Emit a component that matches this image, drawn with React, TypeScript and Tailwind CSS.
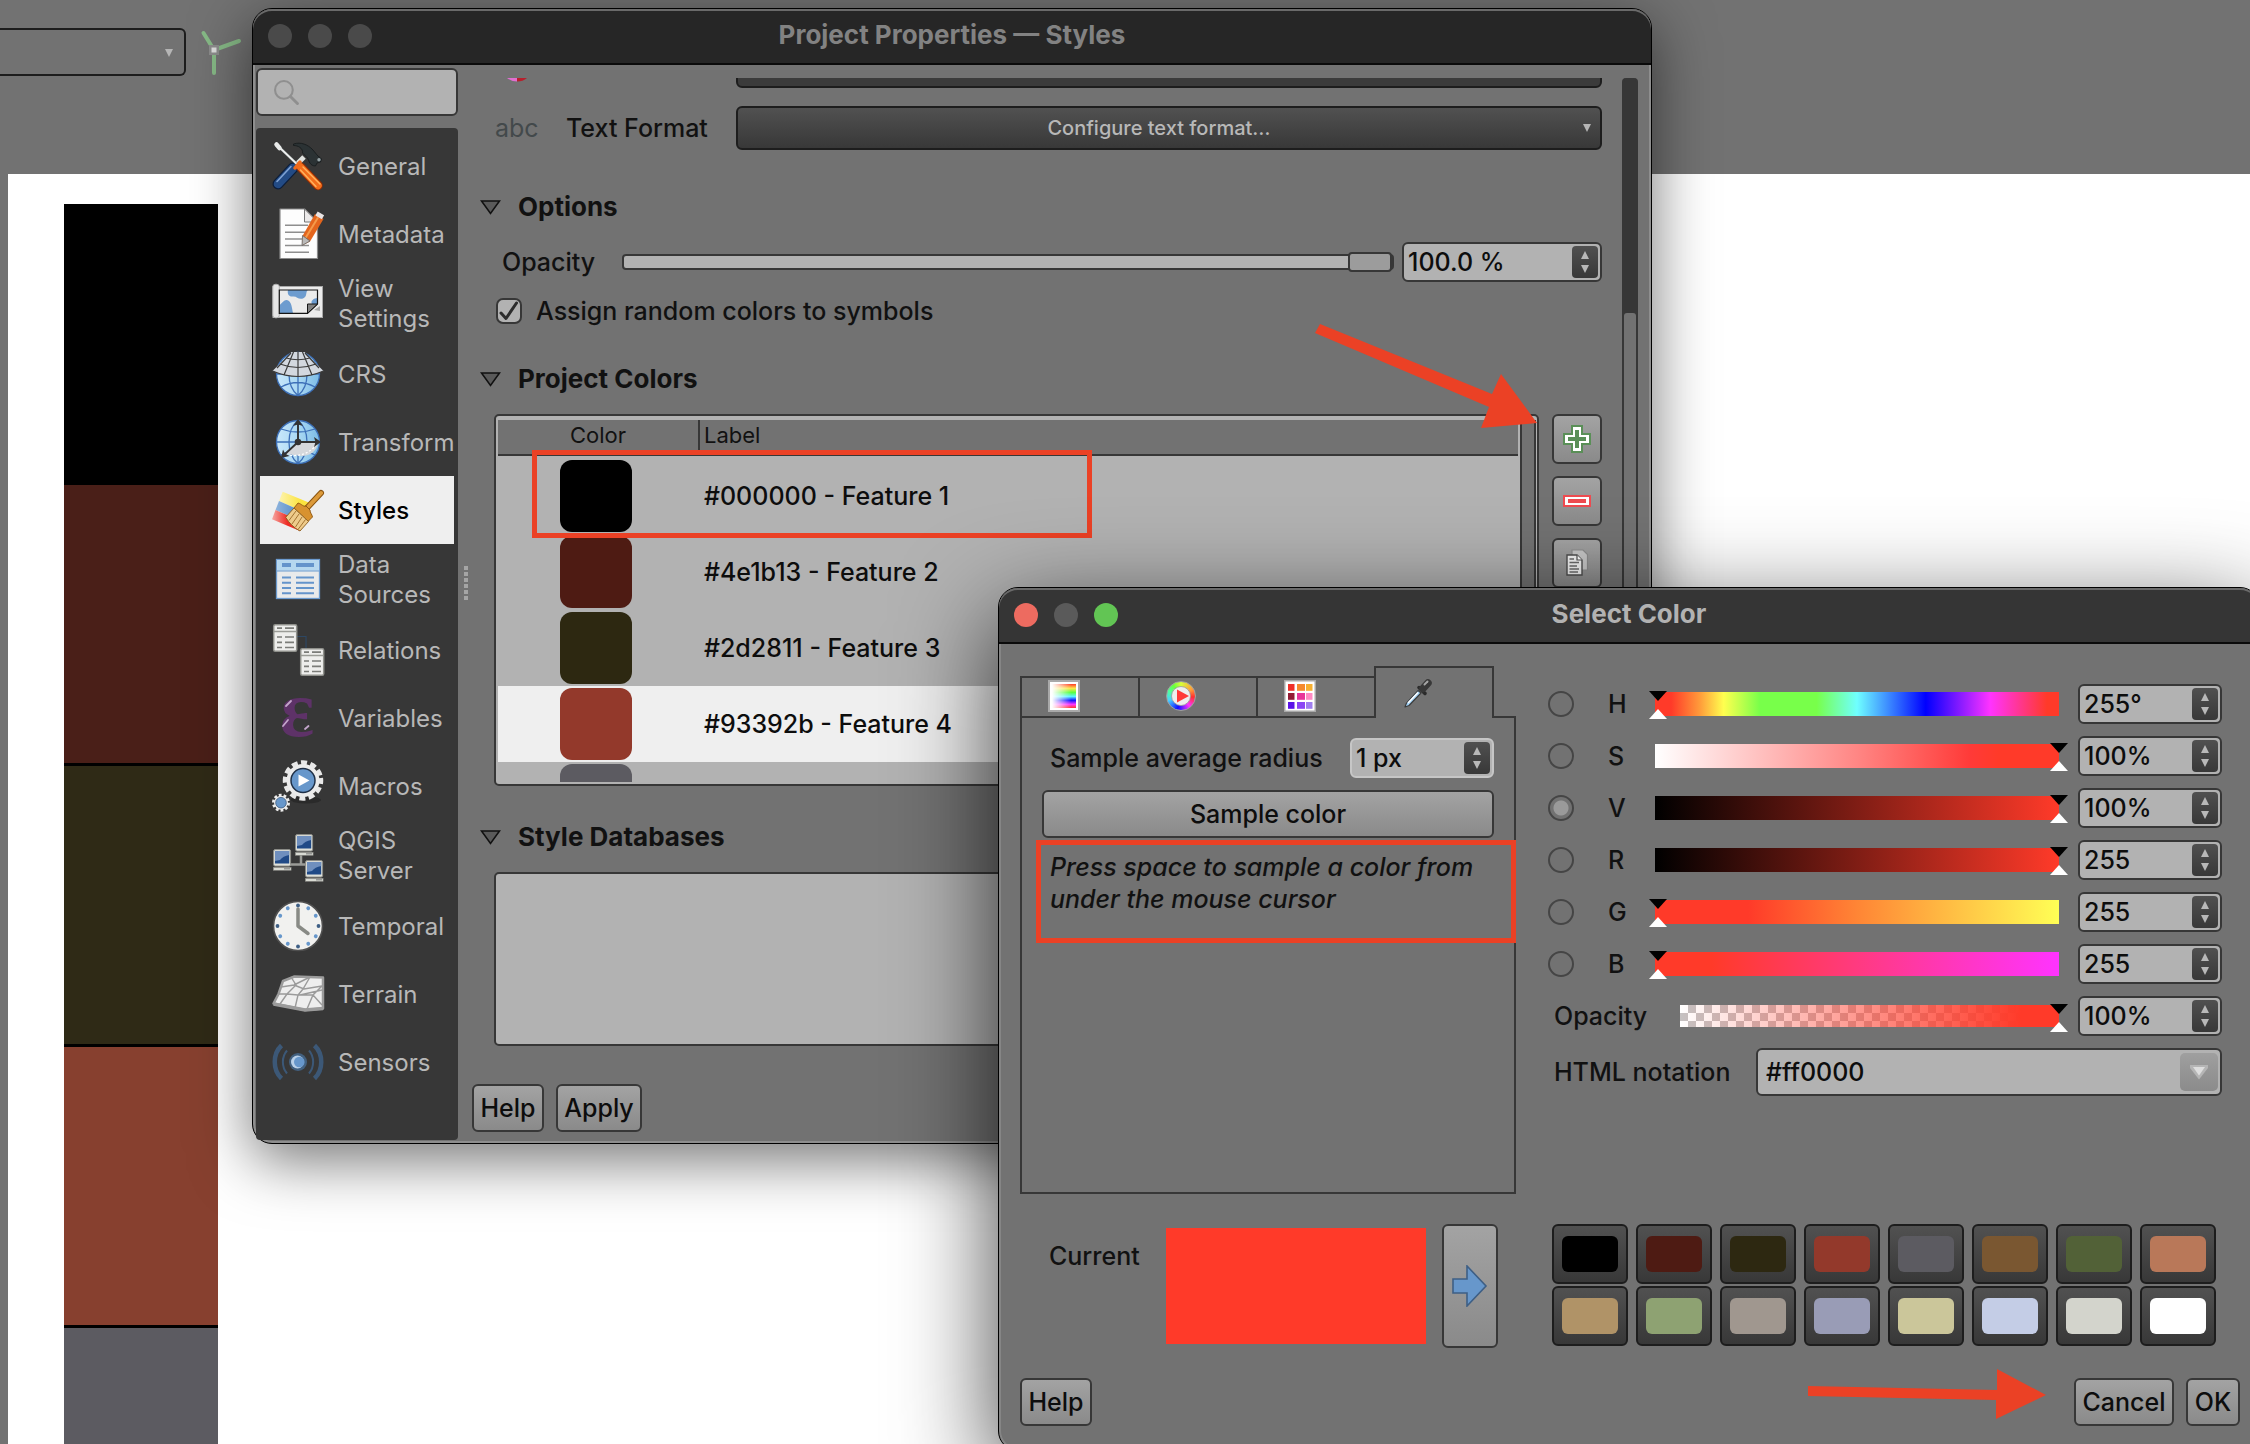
import React from "react";

const RED = "#eb4125";

/* ---------- sidebar icons ---------- */

function Icon({ children }: { children: React.ReactNode }) {
  return (
    <svg viewBox="0 0 52 52" className="size-[52px] shrink-0 overflow-visible" fill="none" aria-hidden="true">
      {children}
    </svg>
  );
}

const GeneralIcon = () => (
  <Icon>
    <path d="M32 17 L20 29" stroke="#dfe3e0" strokeWidth="5" />
    <path d="M21 28 L6 44" stroke="#0d1e3a" strokeWidth="11" strokeLinecap="round" />
    <path d="M21 28 L6 44" stroke="#234b85" strokeWidth="8.5" strokeLinecap="round" />
    <path d="M19 26.500 L5 41.500" stroke="#7fa3d4" strokeWidth="1.600" strokeLinecap="round" />
    <path d="M21.500 4 C29 1.500 36 5 40 9 C44 13 45 16 48 17.500 L49.500 19 L48.500 22 L45 23 L43.500 26 C38 26 37 21 35.500 18 L30.500 13 C31 8 26 5.500 21.500 5.500 Z" fill="#2b3234" stroke="#14191a" strokeWidth="0.800" />
    <circle cx="47" cy="19.800" r="1.700" fill="#97a5a8" />
    <path d="M6 6 L27 26" stroke="#55595a" strokeWidth="3" />
    <path d="M6 6 L27 26" stroke="#eef0ef" strokeWidth="1.900" />
    <path d="M4.500 4.500 L7.500 8" stroke="#e8eae9" strokeWidth="4.500" strokeLinecap="round" />
    <path d="M28.500 27 L46 45.500" stroke="#8c2c06" strokeWidth="9.500" strokeLinecap="round" />
    <path d="M28.500 27 L46 45.500" stroke="#f36d1b" strokeWidth="7.500" strokeLinecap="round" />
    <path d="M31 27 L48 44 M28.500 30 L44 46.500" stroke="#ffb45e" strokeWidth="1.400" strokeLinecap="round" />
    <path d="M23 28 L28 22" stroke="#ee6a1c" strokeWidth="3.500" strokeLinecap="round" />
  </Icon>
);

const MetadataIcon = () => (
  <Icon>
    <path d="M8 1 H32.500 L45.500 14 V50.500 H8 Z" fill="#fdfdfd" stroke="#8b8b8b" strokeWidth="1.200" strokeLinejoin="round" />
    <path d="M32.500 1 V14 H45.500 Z" fill="#eceaea" stroke="#777" strokeWidth="1" strokeLinejoin="round" />
    <path d="M13 17.300 H36 M13 24.300 H33 M13 31 H30 M13 37.600 H37 M13 44.300 H37" stroke="#8e8e8e" strokeWidth="1.500" />
    <path d="M43 6 L51.500 11 L38 33.500 L30 37.500 L30.500 28 Z" fill="#e4651d" />
    <path d="M46 9.500 L33.500 30" stroke="#f59a4a" strokeWidth="2" />
    <path d="M30.500 27.500 L38 33 L30 37.500 Z" fill="#b9b9b9" stroke="#666" strokeWidth="0.800" />
    <path d="M44.500 5.500 L51 9.300" stroke="#e9e4e4" strokeWidth="4.500" />
  </Icon>
);

const ViewIcon = () => (
  <Icon>
    <rect x="1" y="8.500" width="49.500" height="31" fill="#ececec" stroke="#a9a9a9" strokeWidth="1" />
    <rect x="0.800" y="6.300" width="6.500" height="33.500" rx="2.500" fill="#e6e6e6" stroke="#aaa" strokeWidth="0.900" />
    <rect x="7.300" y="12" width="38.200" height="23.300" fill="#ebebeb" />
    <path d="M16 12 H36 C33 14 36 18 31 20.500 C26 22 25 18 21 18.500 C17 19 15 16 16 12 Z M7.800 35 V27 C11 24 13 20 17 23 C20 26 20 31 21 35 Z M45.500 20 V26 L40 26 C38 23 42 20 45.500 20 Z" fill="#6d9ccf" />
    <path d="M7.300 12 H45.500 V26 L35.500 35.300 H7.300 Z" stroke="#161616" strokeWidth="1.200" />
    <path d="M45.500 26 H35.500 V35.300 Z" fill="#818181" stroke="#161616" strokeWidth="1" />
    <path d="M42 32 L48 28 V33 Z" fill="#aaa" />
  </Icon>
);

const GlobeBase = () => (
  <>
    <defs>
      <linearGradient id="globe" x1="0" y1="0" x2="1" y2="0">
        <stop offset="0" stopColor="#c9e8fb" />
        <stop offset="0.550" stopColor="#a6d6f2" />
        <stop offset="1" stopColor="#7bbbe6" />
      </linearGradient>
    </defs>
    <circle cx="26" cy="26" r="21.500" fill="url(#globe)" stroke="#3d70b8" strokeWidth="1.300" />
    <path d="M26 4.500 V47.500 M4.500 26 H47.500 M9 13 Q26 19 43 13 M9 39 Q26 30 43 39 M26 4.500 C14 14 14 38 26 47.500 C38 38 38 14 26 4.500" stroke="#3d70b8" strokeWidth="1.300" />
  </>
);

const CrsIcon = () => (
  <Icon>
    <GlobeBase />
    <path d="M19.500 4 H32.500 C39 10 45 17 51.500 23 Q26 34 0.500 23 C7 17 13 10 19.500 4 Z" fill="#d3d8df" />
    <path d="M0.500 23 Q26 34 51.500 23 M8 16 Q26 23 44 16 M14 10 Q26 13.500 38 10 M21.500 4 L12 27 M26 4 V28.500 M30.500 4 L40 27 M19 5 L5 20 M33 5 L47 20" stroke="#3c3c3c" strokeWidth="1.200" />
  </Icon>
);

const TransformIcon = () => (
  <Icon>
    <GlobeBase />
    <path d="M26 26.500 H46 C45 35 38 40 30 40 L14 38 Z" fill="#d5d8dc" />
    <path d="M14 39 Q34 42 44 29" stroke="#fff" strokeWidth="1.200" strokeDasharray="2 2" />
    <path d="M26 26 V6 M26 26 H45 M26 26 L12 39" stroke="#333" strokeWidth="1.900" />
    <circle cx="26" cy="26" r="3.300" fill="#333" />
    <path d="M26 3 L31 10 L26 8.500 L21 10 Z M49 26 L42 31 L43.500 26 L42 21 Z M9 42 L11 33.500 L13 37.500 L17.500 40 Z" fill="#333" />
  </Icon>
);

const StylesIcon = () => (
  <Icon>
    <defs>
      <linearGradient id="fadeY" x1="0" x2="1"><stop offset="0" stopColor="#fdf3b0" /><stop offset="0.700" stopColor="#fbe33e" /></linearGradient>
      <linearGradient id="fadeB" x1="0" x2="1"><stop offset="0" stopColor="#8fb4dd" /><stop offset="0.600" stopColor="#5f92cb" /></linearGradient>
      <linearGradient id="fadeR" x1="0" x2="1"><stop offset="0" stopColor="#f6a8a3" /><stop offset="0.500" stopColor="#ee2c24" /></linearGradient>
    </defs>
    <path d="M10.700 7.700 L38 19 L34 29 L7 17 Z" fill="url(#fadeY)" />
    <path d="M7 17 L34 29 L31 38 L3.500 26 Z" fill="url(#fadeB)" />
    <path d="M3.500 26 L31 38 L28 47 L0 35.300 Z" fill="url(#fadeR)" />
    <path d="M49 9 L34 25" stroke="#8a5410" strokeWidth="6" strokeLinecap="round" />
    <path d="M49 9 L34 25" stroke="#dc9a3a" strokeWidth="4" strokeLinecap="round" />
    <path d="M26 19 C30 20 31 23 34 22 L38 26 C38 29 40 30 40.500 33 L36 37.500 L22 24 Z" fill="#d8922f" stroke="#8a5410" strokeWidth="0.900" />
    <path d="M22 24 L36.500 37.500 L28 47 C22 44 17 39 13.700 33.300 Z" fill="#eecb8b" stroke="#8a5c1c" strokeWidth="0.900" />
    <path d="M24 27 L17 36.500 M27 30 L20 40 M30 33 L23.500 43 M33.500 35.500 L26 45.500" stroke="#9a6a28" strokeWidth="0.900" />
  </Icon>
);

const DataIcon = () => (
  <Icon>
    <rect x="4.500" y="5.500" width="43" height="39" fill="#e9eaeb" stroke="#6c9bd0" strokeWidth="1.300" />
    <rect x="5.200" y="6.200" width="41.600" height="10.500" fill="#b5d8ef" />
    <path d="M5 17 H47" stroke="#6c9bd0" strokeWidth="1" />
    <path d="M10 11 H19 M24 11 H42" stroke="#6494cb" strokeWidth="4" />
    <path d="M10 23.500 H19 M24 23.500 H42 M10 28.700 H19 M24 28.700 H42 M10 34 H19 M24 34 H42 M10 39.300 H19 M24 39.300 H42" stroke="#6494cb" strokeWidth="1.900" />
  </Icon>
);

const MiniTable = ({ x, y }: { x: number; y: number }) => (
  <g transform={`translate(${x} ${y})`}>
    <rect x="0.700" y="0.700" width="23" height="26.600" rx="1.500" fill="#eeeeec" stroke="#8f908b" strokeWidth="1.500" />
    <path d="M1 7.500 H23.500" stroke="#9b9c97" strokeWidth="1.500" />
    <path d="M4 4.200 H9 M12 4.200 H21 M4 13 H9 M12 13 H21 M4 18.300 H9 M12 18.300 H21 M4 23.500 H9 M12 23.500 H21" stroke="#7b7c78" strokeWidth="1.700" />
  </g>
);

const RelationsIcon = () => (
  <Icon>
    <path d="M25 12.500 H34 V25" stroke="#2d4763" strokeWidth="1.200" />
    <MiniTable x={1} y={0} />
    <MiniTable x={28} y={24} />
  </Icon>
);

const VariablesIcon = () => (
  <Icon>
    <text x="25" y="44" textAnchor="middle" fontSize="80" fontFamily="Liberation Serif, serif" fontWeight="700" fill="#5e3268">ε</text>
    <path d="M14 14 L19 9 M11 34 L16 28 M33 37 L36.500 34" stroke="#c3a5cb" strokeWidth="1.800" strokeLinecap="round" />
  </Icon>
);

const MacrosIcon = () => (
  <Icon>
    <ellipse cx="34" cy="40" rx="15" ry="3.500" fill="#2a2a2a" />
    <circle cx="31" cy="20.500" r="18" stroke="#e8e8e8" strokeWidth="4.500" strokeDasharray="5.900 3.530" transform="rotate(-8 31 20.500)" />
    <circle cx="31" cy="20.500" r="16.500" fill="#ececec" />
    <circle cx="31" cy="20.500" r="12" fill="#6797cb" stroke="#1f3047" strokeWidth="1.500" />
    <path d="M26.500 14.500 L37.500 20.500 L26.500 26.500 Z" fill="#fff" />
    <circle cx="9" cy="42.700" r="7.500" stroke="#ececec" strokeWidth="3" strokeDasharray="2.700 2.010" />
    <circle cx="9" cy="42.700" r="7" fill="#ececec" />
    <circle cx="9" cy="42.700" r="5.300" fill="#6797cb" stroke="#3d5a7c" strokeWidth="0.800" />
  </Icon>
);

const Monitor = ({ x, y }: { x: number; y: number }) => (
  <g transform={`translate(${x} ${y})`}>
    <rect x="0.600" y="0.600" width="17" height="16.500" rx="1.500" fill="#dfe1da" stroke="#8b8c87" strokeWidth="1" />
    <rect x="2" y="2" width="14.200" height="12.500" fill="#204a87" />
    <path d="M2 2 H16.200 V6 Q10 7 7 11 L2 12 Z" fill="#6f8fbe" />
    <rect x="0.300" y="18.300" width="17.800" height="3" fill="#d8dad3" stroke="#82837e" strokeWidth="0.600" />
    <path d="M11 19.800 H17" stroke="#888" strokeWidth="1.200" />
  </g>
);

const ServerIcon = () => (
  <Icon>
    <path d="M29 25 V34.500 M17 34.500 H35" stroke="#9b9c98" strokeWidth="2.500" />
    <Monitor x={23} y={4} />
    <Monitor x={1} y={19} />
    <Monitor x={33} y={30} />
  </Icon>
);

const TemporalIcon = () => (
  <Icon>
    <circle cx="26" cy="26" r="24.500" fill="#f1f1ef" stroke="#4f4f4f" strokeWidth="1.600" />
    {Array.from({ length: 12 }, (_, i) => (
      <circle key={i} cx={26} cy={5.5} r={1.9} fill={i % 3 ? "#6797cb" : "#3e5f85"} transform={`rotate(${i * 30} 26 26)`} />
    ))}
    <path d="M26 9 V26 L36 33.500" stroke="#888a85" strokeWidth="3.500" strokeLinecap="round" strokeLinejoin="round" />
  </Icon>
);

const TerrainIcon = () => (
  <Icon>
    <path d="M11 13 L22.500 8.500 L51 9.500 V40.500 L33 42 L1.500 35.500 L6.500 26 Z" fill="#eeeeee" stroke="#9b9b9b" strokeWidth="2.500" strokeLinejoin="round" />
    <path d="M9 19 L22 17 L30 13 L38 9 M22 17 L32 21 L50 18 M7 26 L15 26 L26 27 L41 27 L50 37 M19 9 L24 17 L15 26 L8 36 M38 9 L31 21 L26 27 L23 40 M50 18 L41 27 L35 41 M28 27 L50 22" stroke="#9b9b9b" strokeWidth="1.400" />
    <path d="M1.500 36 L33 42 L51 40.500" stroke="#9b9b9b" strokeWidth="3.500" />
  </Icon>
);

const SensorsIcon = () => (
  <Icon>
    <path d="M9.500 9.500 C0.500 18 0.500 34 9.500 42.500 M42.500 9.500 C51.500 18 51.500 34 42.500 42.500" stroke="#3c5877" strokeWidth="4.500" />
    <path d="M15 14.500 C9.500 21 9.500 31 15 37.500 M37 14.500 C42.500 21 42.500 31 37 37.500" stroke="#3c5877" strokeWidth="2" />
    <circle cx="26" cy="26" r="9" fill="#42607f" />
    <circle cx="25.500" cy="26" r="6.500" fill="#b9d0e8" />
    <circle cx="27.300" cy="26" r="5.300" fill="#6797cb" />
  </Icon>
);

const NAV: { label: string; icon: () => React.JSX.Element; tall?: boolean; active?: boolean }[] = [
  { label: "General", icon: GeneralIcon },
  { label: "Metadata", icon: MetadataIcon },
  { label: "View Settings", icon: ViewIcon, tall: true },
  { label: "CRS", icon: CrsIcon },
  { label: "Transform", icon: TransformIcon },
  { label: "Styles", icon: StylesIcon, active: true },
  { label: "Data Sources", icon: DataIcon, tall: true },
  { label: "Relations", icon: RelationsIcon },
  { label: "Variables", icon: VariablesIcon },
  { label: "Macros", icon: MacrosIcon },
  { label: "QGIS Server", icon: ServerIcon, tall: true },
  { label: "Temporal", icon: TemporalIcon },
  { label: "Terrain", icon: TerrainIcon },
  { label: "Sensors", icon: SensorsIcon },
];

/* ---------- shared controls ---------- */

function PushButton({ children, className = "" }: { children: React.ReactNode; className?: string }) {
  return (
    <button
      type="button"
      className={`flex items-center justify-center rounded-[6px] border-2 border-[#373737] bg-linear-to-b from-[#a3a3a3] to-[#8a8a8a] text-[25px] leading-8 font-medium text-[#0d0d0d] ${className}`}
    >
      {children}
    </button>
  );
}

function Spin({ id, label, value, className = "", border = "border-[#373737]" }: { id: string; label: string; value: string; className?: string; border?: string }) {
  return (
    <div className={`flex h-10 shrink-0 items-center rounded-[6px] border-2 bg-[#b2b2b2] pr-0.5 ${border} ${className}`}>
      <input id={id} aria-label={label} defaultValue={value} className="w-full min-w-0 flex-1 bg-transparent pl-1 text-[25px] leading-8 font-medium text-[#0d0d0d] outline-none" />
      <button type="button" aria-label={`Step ${label}`} className="flex h-8 w-[26px] shrink-0 items-center justify-center rounded-[4px] bg-linear-to-b from-[#505050] to-[#383838]">
        <svg viewBox="0 0 26 32" className="h-8 w-[26px]" fill="#b8b8b8" aria-hidden="true">
          <path d="M13 5 L17 13 H9 Z M13 27 L17 19 H9 Z" />
        </svg>
      </button>
    </div>
  );
}

function SectionTitle({ children, className = "" }: { children: React.ReactNode; className?: string }) {
  return (
    <h2 className={`flex h-8 items-center gap-[17px] text-[26px] leading-8 font-bold text-[#111] ${className}`}>
      <svg viewBox="0 0 21 15" className="h-[15px] w-[21px]" aria-hidden="true">
        <path d="M1.500 1 H19.500 L10.500 13.500 Z" fill="#5a5a5a" stroke="#111" strokeWidth="1.600" />
      </svg>
      {children}
    </h2>
  );
}

function Caret({ className = "" }: { className?: string }) {
  return (
    <svg viewBox="0 0 8 8" className={`size-2 ${className}`} fill="#b5b5b5" aria-hidden="true">
      <path d="M0 0 H8 L4 8 Z" />
    </svg>
  );
}

function TitleBar({ title, bar, text, lights }: { title: string; bar: string; text: string; lights: string[] }) {
  return (
    <header className={`relative flex h-14 items-center justify-center rounded-t-[19px] border-b-2 border-[#0a0a0a] shadow-[inset_0_2px_0_#6a6a6a] ${bar}`}>
      <div className="absolute left-[15px] flex gap-4">
        {lights.map((c, i) => (
          <span key={i} className={`size-6 rounded-full ${c}`} />
        ))}
      </div>
      <h1 className={`pb-0.5 text-[26px] leading-8 font-bold ${text}`}>{title}</h1>
    </header>
  );
}

/* ---------- project properties window ---------- */

const COLORS = [
  { c: "#000000", label: "#000000 - Feature 1" },
  { c: "#4e1b13", label: "#4e1b13 - Feature 2" },
  { c: "#2d2811", label: "#2d2811 - Feature 3" },
  { c: "#93392b", label: "#93392b - Feature 4", selected: true },
  { c: "#5c5b61", label: "" },
];

function Sidebar() {
  return (
    <div className="flex w-[202px] shrink-0 flex-col gap-3">
      <label className="flex h-12 items-center rounded-[6px] border-2 border-[#373737] bg-[#b2b2b2] pl-4">
        <svg viewBox="0 0 24 24" className="size-[25px] shrink-0" fill="none" stroke="#8f8f8f" strokeWidth="2" strokeLinecap="round" aria-hidden="true">
          <circle cx="9.500" cy="9.500" r="8.500" />
          <path d="M16 16 L22.500 22.500" strokeWidth="2.800" />
        </svg>
        <input type="search" aria-label="Search" className="w-full min-w-0 bg-transparent pl-2 text-[24px] outline-none" />
      </label>
      <nav className="flex flex-1 flex-col rounded-[4px] bg-[#373737] px-1 pt-1 pb-11">
        {NAV.map(({ label, icon: I, tall, active }) => (
          <button
            type="button"
            key={label}
            className={`flex w-full items-center gap-[14px] pl-3 text-left text-[24px] leading-[30px] ${tall ? "h-[72px]" : "h-[68px]"} ${active ? "bg-[#efefef] font-medium text-black" : "text-[#b8b8b8]"}`}
          >
            <I />
            <span className={tall ? "" : "pt-0.5"}>{label}</span>
          </button>
        ))}
      </nav>
    </div>
  );
}

function ColorTable() {
  return (
    <div className="relative ml-[14px] h-[372px] w-[1045px] shrink-0">
      <div className="flex h-full overflow-hidden rounded-[5px] border-2 border-[#373737] bg-[#b2b2b2] pt-1 pr-px pb-0.5 pl-0.5">
        <div className="h-full flex-1 overflow-hidden">
          <table className="w-full border-separate border-spacing-0 text-left">
            <thead>
              <tr className="text-[22px] leading-7 text-[#111]">
                <th scope="col" className="h-9 w-[202px] border-r-2 border-b-2 border-[#373737] bg-[#727272] p-0 pb-1 text-center font-normal">Color</th>
                <th scope="col" className="h-9 border-b-2 border-[#373737] bg-[#727272] p-0 pb-1 pl-1 font-normal">Label</th>
              </tr>
            </thead>
            <tbody className="before:block before:h-0.5 before:content-['']">
              {COLORS.map((r) => (
                <tr key={r.c} className={`h-[76px] ${r.selected ? "bg-[#efefef]" : ""}`}>
                  <td className="p-0 pl-[62px]">
                    <div className="h-[72px] w-[72px] rounded-xl" style={{ backgroundColor: r.c }} />
                  </td>
                  <td className="p-0 pl-1 text-[25px] leading-8 font-medium text-[#0d0d0d]">{r.label}</td>
                </tr>
              ))}
            </tbody>
          </table>
        </div>
        <div className="ml-0.5 w-4 border-2 border-[#373737] bg-[#727272]" />
      </div>
      <div className="absolute top-9 left-[38px] h-[88px] w-[560px] border-[5px] border-[#eb4125]" />
    </div>
  );
}

function PropertiesWindow() {
  return (
    <section className="absolute top-2 right-[598px] left-[252px] min-w-[1400px] rounded-[20px] border border-black bg-[#727272] shadow-[inset_0_0_0_2px_#8e8e8e,0_16px_60px_rgba(0,0,0,0.55)]">
      <TitleBar title="Project Properties — Styles" bar="bg-[#262626]" text="text-[#828282]" lights={["bg-[#4a4a4a]", "bg-[#4a4a4a]", "bg-[#4a4a4a]"]} />
      <div className="flex px-[3px] pt-[3px] pb-[3px]">
        <Sidebar />
        <div className="flex w-[14px] items-center justify-center">
          <div className="mb-10 ml-0.5 h-9 w-1 bg-[repeating-linear-gradient(to_bottom,#a5a5a5_0_4px,transparent_4px_6px)]" />
        </div>
        <div className="flex flex-1 flex-col">
          <div className="flex flex-1 pt-[10px] pr-[10px]">
            <div className="flex min-w-0 flex-1 flex-col pl-2">
              <div className="flex h-[10px] items-end overflow-hidden">
                <svg viewBox="0 0 20 4" className="mb-[6px] ml-[27px] h-1 w-5" aria-hidden="true">
                  <path d="M0 0 H10 V3.500 Q4 3.500 0 0" fill="#e06fd0" />
                  <path d="M10 0 H20 Q16 3.500 10 3.500" fill="#b81f2c" />
                </svg>
                <div className="ml-auto h-8 w-[866px] rounded-[6px] border-2 border-[#1d1d1d] bg-[#3b3b3b]" />
              </div>
              <div className="mt-[18px] flex h-11 items-center text-[25px] leading-8 text-[#111]">
                <span className="ml-[15px] w-[71px] text-[#43494b]">abc</span>
                <span className="flex-1 font-medium">Text Format</span>
                <button type="button" className="relative flex h-11 w-[866px] items-center justify-center rounded-[6px] border-2 border-[#1d1d1d] bg-linear-to-b from-[#515151] to-[#383838] pr-5 text-[20px] font-medium text-[#b8b8b8]">
                  Configure text format…
                  <Caret className="absolute right-[9px]" />
                </button>
              </div>
              <SectionTitle className="mt-[41px]">Options</SectionTitle>
              <div className="mt-[19px] flex h-10 items-center text-[25px] leading-8 font-medium text-[#111]">
                <label htmlFor="layer-opacity" className="ml-[22px] w-[120px]">Opacity</label>
                <input
                  id="layer-opacity"
                  type="range"
                  defaultValue={100}
                  className="mr-2 h-4 min-w-0 flex-1 appearance-none rounded-[4px] border-2 border-[#373737] bg-[#b2b2b2] [&::-webkit-slider-thumb]:h-5 [&::-webkit-slider-thumb]:w-11 [&::-webkit-slider-thumb]:appearance-none [&::-webkit-slider-thumb]:rounded-[4px] [&::-webkit-slider-thumb]:border-2 [&::-webkit-slider-thumb]:border-[#373737] [&::-webkit-slider-thumb]:bg-[#9c9c9c]"
                />
                <Spin id="opacity-value" label="opacity value" value="100.0 %" className="w-[200px]" />
              </div>
              <label className="mt-4 ml-4 flex h-[26px] items-center gap-[14px] text-[25px] leading-8 font-medium text-[#111]">
                <span className="relative size-[26px]">
                  <input type="checkbox" defaultChecked className="block size-[26px] appearance-none rounded-[7px] border-2 border-[#373737] bg-[#b2b2b2]" />
                  <svg viewBox="0 0 26 26" className="pointer-events-none absolute inset-0 size-[26px]" fill="none" stroke="#2d2d2d" strokeWidth="3" strokeLinecap="round" strokeLinejoin="round" aria-hidden="true">
                    <path d="M5 15 L10 20.500 L20.500 5" />
                  </svg>
                </span>
                Assign random colors to symbols
              </label>
              <SectionTitle className="mt-[39px]">Project Colors</SectionTitle>
              <div className="mt-[19px] flex">
                <ColorTable />
                <div className="ml-auto flex flex-col gap-3">
                  <PushButton className="h-[50px] w-[50px]">
                    <svg viewBox="0 0 30 30" className="size-[30px]" aria-label="Add color" role="img">
                      <path d="M10 2 H20 V10 H28 V20 H20 V28 H10 V20 H2 V10 H10 Z" fill="#fff" stroke="#5a8f57" strokeWidth="2" />
                      <path d="M15 6 V24 M6 15 H24" stroke="#5a8f57" strokeWidth="4" />
                    </svg>
                  </PushButton>
                  <PushButton className="h-[50px] w-[50px]">
                    <svg viewBox="0 0 30 30" className="size-[30px]" aria-label="Remove color" role="img">
                      <path d="M2 10 H28 V20 H2 Z" fill="#fff" stroke="#ee4b50" strokeWidth="2" />
                      <path d="M6 15 H24" stroke="#ee4b50" strokeWidth="4" />
                    </svg>
                  </PushButton>
                  <PushButton className="h-[50px] w-[50px]">
                    <svg viewBox="0 0 30 30" className="size-[30px]" aria-label="Copy colors" role="img">
                      <path d="M10 2 H21 L25.500 6.500 V22 H10 Z" fill="#c6c6c6" stroke="#8b8b8b" strokeWidth="1.200" />
                      <path d="M5 7 H15 L20 12 V27 H5 Z" fill="#f2f2f2" stroke="#4e4e4e" strokeWidth="1.400" />
                      <path d="M15 7 V12 H20" fill="#fff" stroke="#4e4e4e" strokeWidth="1.200" />
                      <path d="M7.500 11 H12 M7.500 14.500 H17 M7.500 18 H15 M7.500 21 H17 M7.500 24 H16" stroke="#6b6b6b" strokeWidth="1.300" />
                    </svg>
                  </PushButton>
                </div>
              </div>
              <SectionTitle className="mt-[35px]">Style Databases</SectionTitle>
              <div className="mt-[19px] mr-[63px] ml-[14px] h-[174px] rounded-[5px] border-2 border-[#373737] bg-[#b2b2b2]" />
            </div>
            <div className="ml-5 w-4 rounded-t-[4px] border-x-2 border-[#373737] bg-[#373737] pt-[235px]">
              <div className="h-full rounded-t-[3px] bg-[#727272]" />
            </div>
          </div>
          <div className="flex gap-3 pt-[38px] pb-2">
            <PushButton className="h-12 w-[72px]">Help</PushButton>
            <PushButton className="h-12 w-[86px]">Apply</PushButton>
          </div>
        </div>
      </div>
      <svg viewBox="0 0 222 104" className="pointer-events-none absolute top-[315px] left-[1062px] h-[104px] w-[222px]" fill={RED} aria-hidden="true">
        <path d="M5 0 L177 70 L186 50 L222 99 L166 104 L174 83 L0 9 Z" />
      </svg>
    </section>
  );
}

/* ---------- select color dialog ---------- */

const CHANNELS = [
  { k: "H", v: "255°", at: "start", bar: "bg-[linear-gradient(to_right,#ff3a29_4%,#ff9a3a_11%,#ffff4f_17%,#78ff4a_26%,#78ff4a_40%,#6fffff_50%,#0000ff_67%,#ff33ff_83%,#ff3a29_97%)]" },
  { k: "S", v: "100%", at: "end", bar: "bg-[linear-gradient(to_right,#ffffff,#ff8684_50%,#ff3a38_78%,#ff3a29_85%)]" },
  { k: "V", v: "100%", at: "end", on: true, bar: "bg-[linear-gradient(to_right,#000000,#ff3a29)]" },
  { k: "R", v: "255", at: "end", bar: "bg-[linear-gradient(to_right,#000000,#ff3a29)]" },
  { k: "G", v: "255", at: "start", bar: "bg-[linear-gradient(to_right,#ff3a29_23%,#ff8535_50%,#ffff55)]" },
  { k: "B", v: "255", at: "start", bar: "bg-[linear-gradient(to_right,#ff3a29_14%,#ff3a80_50%,#ff33ff)]" },
];

function Ramp({ label, bar, at, height = "h-6" }: { label: string; bar: string; at: string; height?: string }) {
  return (
    <div className={`relative min-w-0 flex-1 ${height}`}>
      <input
        type="range"
        aria-label={label}
        min={0}
        max={100}
        defaultValue={at === "end" ? 100 : 0}
        className={`block w-full appearance-none [&::-webkit-slider-thumb]:h-6 [&::-webkit-slider-thumb]:w-1 [&::-webkit-slider-thumb]:appearance-none [&::-webkit-slider-thumb]:bg-transparent ${height} ${bar}`}
      />
      <svg viewBox="0 0 18 28" className={`pointer-events-none absolute -top-px h-7 w-[18px] ${at === "end" ? "-right-[9px]" : "-left-[6px]"}`} aria-hidden="true">
        <path d="M0 0 H18 L9 10 Z" fill="#000" />
        <path d="M0 28 H18 L9 18 Z" fill="#fff" />
      </svg>
    </div>
  );
}

const SWATCHES = [
  "#000000", "#4e1b13", "#2d2811", "#93392b", "#5c5b61", "#7a5731", "#526137", "#b97859",
  "#b09367", "#8ea272", "#a0978f", "#999cb6", "#cbc69a", "#c4cde6", "#d3d4cc", "#ffffff",
];

const TAB_ICONS = [
  <svg key="box" viewBox="0 0 32 32" className="size-8" role="img" aria-label="Color ramp">
    <defs>
      <linearGradient id="rainbow" x1="0" y1="0" x2="0" y2="1">
        <stop offset="0" stopColor="#ff3a29" /><stop offset="0.180" stopColor="#ffe74a" /><stop offset="0.350" stopColor="#5cff3d" />
        <stop offset="0.520" stopColor="#59f6ff" /><stop offset="0.680" stopColor="#1010ff" /><stop offset="0.850" stopColor="#ff33ff" /><stop offset="1" stopColor="#ff3a29" />
      </linearGradient>
      <linearGradient id="whiten"><stop offset="0" stopColor="#fff" /><stop offset="0.800" stopColor="#fff" stopOpacity="0" /></linearGradient>
    </defs>
    <rect width="32" height="32" fill="#a9a9a9" />
    <rect x="2" y="2" width="28" height="28" fill="#fff" />
    <rect x="4" y="4" width="24" height="24" fill="url(#rainbow)" />
    <rect x="4" y="4" width="24" height="24" fill="url(#whiten)" />
  </svg>,
  <span key="wheel" className="relative flex size-[30px] items-center justify-center rounded-full border border-[#a0a0a0] bg-[conic-gradient(#d9ff3a,#ff9a3a_60deg,#ff3030_95deg,#ff33ff_140deg,#1010ff_195deg,#4ad0ff_250deg,#4dffa0_290deg,#6bff3a_325deg,#d9ff3a)]">
    <svg viewBox="0 0 20 20" className="size-5" role="img" aria-label="Color wheel">
      <circle cx="10" cy="10" r="9.500" fill="#eee" stroke="#999" strokeWidth="0.800" />
      <path d="M6 3.500 L18 10 L6 16.500 Z" fill="#ff3a38" />
    </svg>
  </span>,
  <svg key="grid" viewBox="0 0 32 32" className="size-8" role="img" aria-label="Color swatches">
    <rect width="32" height="32" fill="#a9a9a9" />
    <rect x="1.500" y="1.500" width="29" height="29" fill="#fff" />
    {["#f0302a", "#f58a2e", "#f7b031", "#931b34", "#e8359a", "#ff8ac4", "#5a12e8", "#8a45f5", "#a07ff0"].map((c, i) => (
      <rect key={c} x={4 + (i % 3) * 9} y={4 + Math.floor(i / 3) * 9} width={i % 3 === 1 ? 8 : 6.5} height="6.800" fill={c} />
    ))}
  </svg>,
  <svg key="pick" viewBox="0 0 32 32" className="size-8" role="img" aria-label="Color picker">
    <path d="M3 30 L4.500 26 L16 13.500 L19 16 L7 28.500 Z" fill="#9fd0f5" stroke="#3a3a3a" strokeWidth="1.100" strokeLinejoin="round" />
    <path d="M6 26 L16 15.500" stroke="#fff" strokeWidth="1.500" />
    <path d="M17 10.500 L23 16.500" stroke="#2b2b2b" strokeWidth="3.500" strokeLinecap="round" />
    <path d="M21 11.500 L26 6" stroke="#383838" strokeWidth="7.500" strokeLinecap="round" />
    <path d="M22.500 7.500 L25.500 4.500" stroke="#a5a5a5" strokeWidth="2" strokeLinecap="round" />
  </svg>,
];

function SelectColorDialog() {
  return (
    <section className="absolute top-[587px] -right-[10px] left-[998px] min-w-[1262px] rounded-[20px] border border-black bg-[#727272] shadow-[inset_0_0_0_2px_#858585,0_30px_100px_rgba(0,0,0,0.75)]">
      <TitleBar title="Select Color" bar="bg-[#353535]" text="text-[#b2b2b2]" lights={["bg-[#ed6b60]", "bg-[#5a5a5a]", "bg-[#62c554]"]} />
      <div className="flex flex-col gap-[30px] pt-[22px] pr-[19px] pb-6 pl-[21px]">
        <div className="flex gap-8">
          {/* picker tabs and current colour */}
          <div className="flex w-[496px] shrink-0 flex-col">
            <div role="tablist" className="z-10 flex h-[52px] items-end">
              {TAB_ICONS.map((icon, i) => (
                <button
                  type="button"
                  role="tab"
                  aria-selected={i === 3}
                  key={i}
                  className={
                    i === 3
                      ? "flex h-[52px] w-[120px] items-center border-2 border-b-0 border-[#373737] bg-[#727272] pl-[26px]"
                      : "flex h-[42px] w-[118px] items-center border-y-2 border-l-2 border-[#373737] pb-0.5 pl-[26px]"
                  }
                >
                  {icon}
                </button>
              ))}
            </div>
            <div className="relative -mt-0.5 flex h-[478px] flex-col border-2 border-[#373737] pt-5 pr-5 pl-5">
              <div className="flex h-10 items-center justify-between pl-2 text-[25px] leading-8 font-medium text-[#111]">
                <label htmlFor="radius">Sample average radius</label>
                <Spin id="radius" label="radius" value="1 px" className="w-36" border="border-[#c6c6c6]" />
              </div>
              <PushButton className="mt-3 h-12 w-full">Sample color</PushButton>
              <p className="mt-[13px] pl-2 text-[25px] leading-8 font-medium text-[#111] italic">Press space to sample a color from<br />under the mouse cursor</p>
              <div className="absolute top-[122px] -right-0.5 left-[14px] h-[103px] border-[5px] border-[#eb4125]" />
            </div>
            <div className="mt-[30px] flex h-[124px]">
              <span className="mt-4 ml-[29px] w-[117px] text-[25px] leading-8 font-medium text-[#111]">Current</span>
              <div className="my-1 w-[260px] bg-[#ff3a29]" />
              <PushButton className="ml-4 w-14">
                <svg viewBox="0 0 36 42" className="h-[42px] w-9" role="img" aria-label="Add to swatches">
                  <path d="M1 14 H15 V1 L34 21 L15 41 V28 H1 Z" fill="#6797cb" stroke="#3e5f85" strokeWidth="1.600" />
                </svg>
              </PushButton>
            </div>
          </div>
          {/* channel sliders and swatches */}
          <div className="flex min-w-0 flex-1 flex-col gap-3 pt-[18px] pr-[18px]">
            {CHANNELS.map((c) => (
              <div key={c.k} className="flex h-10 items-center text-[25px] leading-8 font-medium text-[#111]">
                <input
                  id={`ch-${c.k}`}
                  type="radio"
                  name="channel"
                  defaultChecked={c.on}
                  className={`block size-[26px] shrink-0 appearance-none self-center rounded-full border-2 border-[#454545] ${c.on ? "bg-[radial-gradient(circle,#9a9a9a_7px,transparent_8px)]" : ""}`}
                />
                <label htmlFor={`ch-${c.k}`} className="ml-[34px] w-[47px]">{c.k}</label>
                <Ramp label={c.k} bar={c.bar} at={c.at} />
                <Spin id={`val-${c.k}`} label={`${c.k} value`} value={c.v} className="ml-[19px] w-36" />
              </div>
            ))}
            <div className="flex h-10 items-center text-[25px] leading-8 font-medium text-[#111]">
              <span className="ml-1.5 w-[126px]">Opacity</span>
              <Ramp
                label="Opacity"
                at="end"
                height="h-[22px]"
                bar="bg-[linear-gradient(to_right,transparent,#ff3a29_90%),repeating-conic-gradient(#c6c2c2_0_25%,#ffffff_0_50%)] bg-[length:100%_100%,16px_16px]"
              />
              <Spin id="val-opacity" label="Opacity value" value="100%" className="ml-[19px] w-36" />
            </div>
            <div className="flex h-12 items-center text-[25px] leading-8 font-medium text-[#111]">
              <label htmlFor="html" className="ml-1.5 w-[202px] shrink-0">HTML notation</label>
              <div className="flex h-12 min-w-0 flex-1 items-center rounded-[6px] border-2 border-[#373737] bg-[#b2b2b2] pr-0.5">
                <input id="html" defaultValue="#ff0000" className="min-w-0 flex-1 bg-transparent pl-2 text-[25px] leading-8 font-medium text-[#0d0d0d] outline-none" />
                <button type="button" aria-label="Color menu" className="flex h-[38px] w-[38px] items-center justify-center rounded-[5px] bg-linear-to-b from-[#9f9f9f] to-[#8b8b8b]">
                  <svg viewBox="0 0 20 16" className="h-4 w-5" aria-hidden="true">
                    <path d="M1 1 H19 V4 L10 15.500 L1 4 Z" fill="#b5b5b5" />
                    <path d="M4 3 H16 L10 11.500 Z" fill="#dedede" />
                  </svg>
                </button>
              </div>
            </div>
            <div className="mt-auto mb-0.5 ml-1 grid w-[664px] grid-cols-8 gap-x-2 gap-y-0.5">
              {SWATCHES.map((c, i) => (
                <button type="button" key={i} aria-label={c} className="flex h-[60px] items-start rounded-[6px] border-2 border-[#1d1d1d] bg-linear-to-b from-[#515151] to-[#383838] pt-[10px] pl-2">
                  <span className="h-9 w-14 rounded-[6px]" style={{ backgroundColor: c }} />
                </button>
              ))}
            </div>
          </div>
        </div>
        <div className="relative flex items-center justify-between">
          <PushButton className="h-12 w-[72px]">Help</PushButton>
          <div className="flex items-center gap-3">
            <svg viewBox="0 0 240 50" className="mr-4 -mt-4 h-[50px] w-[240px]" fill={RED} aria-hidden="true">
              <path d="M2 17 L191 21 V0 L240 26 L190 50 V31 L2 27 Z" />
            </svg>
            <PushButton className="h-12 w-[100px]">Cancel</PushButton>
            <PushButton className="h-12 w-[54px]">OK</PushButton>
          </div>
        </div>
      </div>
    </section>
  );
}

/* ---------- map canvas behind the windows ---------- */

const BANDS = ["bg-black", "bg-[#4a1f18]", "bg-[#2f2a16]", "bg-[#87402f]", "bg-[#5c5b61]"];

export default function App() {
  return (
    <main className="relative h-screen min-h-[800px] w-full overflow-hidden bg-[#727272] font-['Inter',sans-serif]">
      <div className="flex h-full flex-col">
        <div className="flex h-[174px] shrink-0 items-start pt-7">
          <div className="relative">
            <select aria-label="Layer" className="block h-12 w-[186px] appearance-none rounded-r-[6px] border-2 border-l-0 border-[#1d1d1d] bg-transparent" />
            <Caret className="pointer-events-none absolute top-[21px] right-[13px]" />
          </div>
          <svg viewBox="0 0 42 46" className="mt-0.5 ml-[14px] h-[46px] w-[42px]" aria-label="Vertex tool" role="img">
            <path d="M14 20 L3.500 3 M14 20 L39 11 M14 20 V43" stroke="#86b986" strokeWidth="4" strokeLinecap="round" />
            <rect x="9" y="15" width="10" height="10" fill="#8b8b8b" />
            <rect x="11.500" y="17.500" width="5" height="5" fill="#dcdcdc" />
          </svg>
        </div>
        <div className="ml-2 flex-1 overflow-hidden bg-white pt-[30px] pl-14">
          <div className="flex w-[154px] flex-col">
            {BANDS.map((b) => (
              <div key={b} className={`h-[281px] border-b-[3px] border-black ${b}`} />
            ))}
          </div>
        </div>
      </div>
      <PropertiesWindow />
      <SelectColorDialog />
    </main>
  );
}
